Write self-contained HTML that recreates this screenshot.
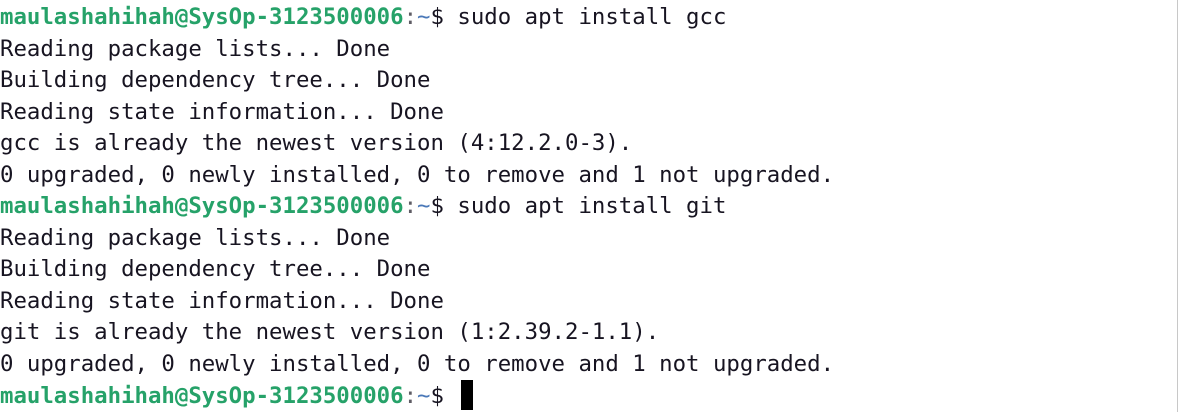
<!DOCTYPE html>
<html><head><meta charset="utf-8"><style>
html,body{margin:0;padding:0;background:#fff;width:1179px;height:414px;overflow:hidden;position:relative}
pre{margin:0;position:absolute;left:0;top:2px;font-family:"DejaVu Sans Mono","Liberation Mono",monospace;font-size:22.35px;line-height:31.5px;color:#171421}
.g{color:#26a269;font-weight:bold}
.c{color:#5e5c64}
.b{color:#4a78b8}
.cur{display:inline-block;width:12px;height:30px;background:#000;vertical-align:-7px;margin-left:4px}
.sb{position:absolute;left:1177px;top:0;width:1px;height:412px;background:#c8c8c8}
</style></head><body>
<pre><span class="g">maulashahihah@SysOp-3123500006</span><span class="c">:</span><span class="b">~</span>$ sudo apt install gcc
Reading package lists... Done
Building dependency tree... Done
Reading state information... Done
gcc is already the newest version (4:12.2.0-3).
0 upgraded, 0 newly installed, 0 to remove and 1 not upgraded.
<span class="g">maulashahihah@SysOp-3123500006</span><span class="c">:</span><span class="b">~</span>$ sudo apt install git
Reading package lists... Done
Building dependency tree... Done
Reading state information... Done
git is already the newest version (1:2.39.2-1.1).
0 upgraded, 0 newly installed, 0 to remove and 1 not upgraded.
<span class="g">maulashahihah@SysOp-3123500006</span><span class="c">:</span><span class="b">~</span>$ <span class="cur"></span></pre>
<div class="sb"></div>
</body></html>
